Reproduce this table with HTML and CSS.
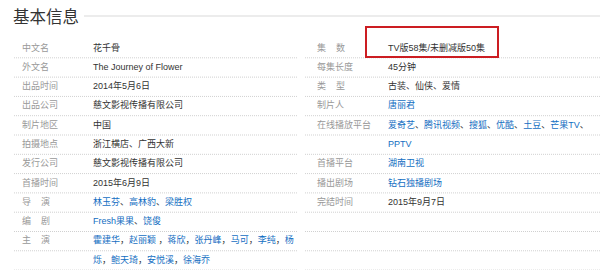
FILE: index.html
```html
<!DOCTYPE html>
<html lang="zh-CN">
<head>
<meta charset="utf-8">
<title>基本信息</title>
<link rel="stylesheet" href="styles.css">
</head>
<body>
<div class="page">
  <div class="title-bar">
    <h2 class="title">基本信息</h2>
    <span class="title-rule"></span>
  </div>
  <div class="info">
    <dl class="col">
      <div class="item"><dt class="label">中文名</dt><dd class="value">花千骨</dd></div>
      <div class="item"><dt class="label">外文名</dt><dd class="value">The Journey of Flower</dd></div>
      <div class="item"><dt class="label">出品时间</dt><dd class="value">2014年5月6日</dd></div>
      <div class="item"><dt class="label">出品公司</dt><dd class="value">慈文影视传播有限公司</dd></div>
      <div class="item"><dt class="label">制片地区</dt><dd class="value">中国</dd></div>
      <div class="item"><dt class="label">拍摄地点</dt><dd class="value">浙江横店、广西大新</dd></div>
      <div class="item"><dt class="label">发行公司</dt><dd class="value">慈文影视传播有限公司</dd></div>
      <div class="item"><dt class="label">首播时间</dt><dd class="value">2015年6月9日</dd></div>
      <div class="item"><dt class="label">导&nbsp;&nbsp;&nbsp;&nbsp;演</dt><dd class="value"><a class="link">林玉芬</a>、<a class="link">高林豹</a>、<a class="link">梁胜权</a></dd></div>
      <div class="item"><dt class="label">编&nbsp;&nbsp;&nbsp;&nbsp;剧</dt><dd class="value"><a class="link">Fresh果果</a>、<a class="link">饶俊</a></dd></div>
      <div class="item"><dt class="label">主&nbsp;&nbsp;&nbsp;&nbsp;演</dt><dd class="value"><a class="link">霍建华</a>，<a class="link">赵丽颖</a> ，<a class="link">蒋欣</a>，<a class="link">张丹峰</a>，<a class="link">马可</a>，<a class="link">李纯</a>，<a class="link">杨烁</a>，<a class="link">鲍天琦</a>，<a class="link">安悦溪</a>，<a class="link">徐海乔</a></dd></div>
    </dl>
    <dl class="col">
      <div class="item"><dt class="label">集&nbsp;&nbsp;&nbsp;&nbsp;数</dt><dd class="value">TV版58集/未删减版50集</dd></div>
      <div class="item"><dt class="label">每集长度</dt><dd class="value">45分钟</dd></div>
      <div class="item"><dt class="label">类&nbsp;&nbsp;&nbsp;&nbsp;型</dt><dd class="value">古装、仙侠、爱情</dd></div>
      <div class="item"><dt class="label">制片人</dt><dd class="value"><a class="link">唐丽君</a></dd></div>
      <div class="item"><dt class="label">在线播放平台</dt><dd class="value"><a class="link">爱奇艺</a>、<a class="link">腾讯视频</a>、<a class="link">搜狐</a>、<a class="link">优酷</a>、<a class="link">土豆</a>、<a class="link">芒果TV</a>、<a class="link">PPTV</a></dd></div>
      <div class="item"><dt class="label">首播平台</dt><dd class="value"><a class="link">湖南卫视</a></dd></div>
      <div class="item"><dt class="label">播出剧场</dt><dd class="value"><a class="link">钻石独播剧场</a></dd></div>
      <div class="item"><dt class="label">完结时间</dt><dd class="value">2015年9月7日</dd></div>
    </dl>
  </div>
  <div class="highlight"></div>
</div>
</body>
</html>
```

FILE: styles.css
```css
html, body {
  margin: 0;
  padding: 0;
  background: #fff;
}

body {
  width: 600px;
  height: 275px;
  overflow: hidden;
  font-family: "Liberation Sans", "Noto Sans CJK SC", sans-serif;
  font-size: 9px;
  color: #333;
}

.page {
  position: relative;
  padding-left: 13px;
}

.title-bar {
  display: flex;
  align-items: center;
  height: 32px;
  margin-bottom: 6.5px;
}

.title {
  margin: 0;
  font-family: "Noto Sans CJK SC", sans-serif;
  font-size: 16.5px;
  font-weight: 400;
  line-height: 32px;
  color: #333;
}

.title-rule {
  flex: 1;
  height: 2px;
  margin-left: 5px;
  background: #ececec;
}

.info {
  display: grid;
  grid-template-columns: 284px 296px;
  column-gap: 7px;
}

.col {
  margin: 0;
  line-height: 19.3px;
  background-image:
    linear-gradient(to right, #fff 1px, transparent 1px),
    linear-gradient(to bottom, transparent 18.3px, #cfcfcf 18.3px);
  background-size: 2px 100%, 100% 19.3px;
  height: 231.6px;
}

.item {
  display: flex;
}

.label {
  flex: none;
  width: 80px;
  padding-left: 9px;
  box-sizing: border-box;
  color: #999;
  white-space: nowrap;
}

.col + .col .label {
  width: 84px;
  padding-left: 13px;
}

.value {
  flex: 1;
  margin: 0;
  min-width: 0;
}

.link {
  color: #136ec2;
  text-decoration: none;
}

.highlight {
  position: absolute;
  left: 365px;
  top: 26px;
  width: 130px;
  height: 28px;
  border: 2px solid #cc1d22;
}
```
